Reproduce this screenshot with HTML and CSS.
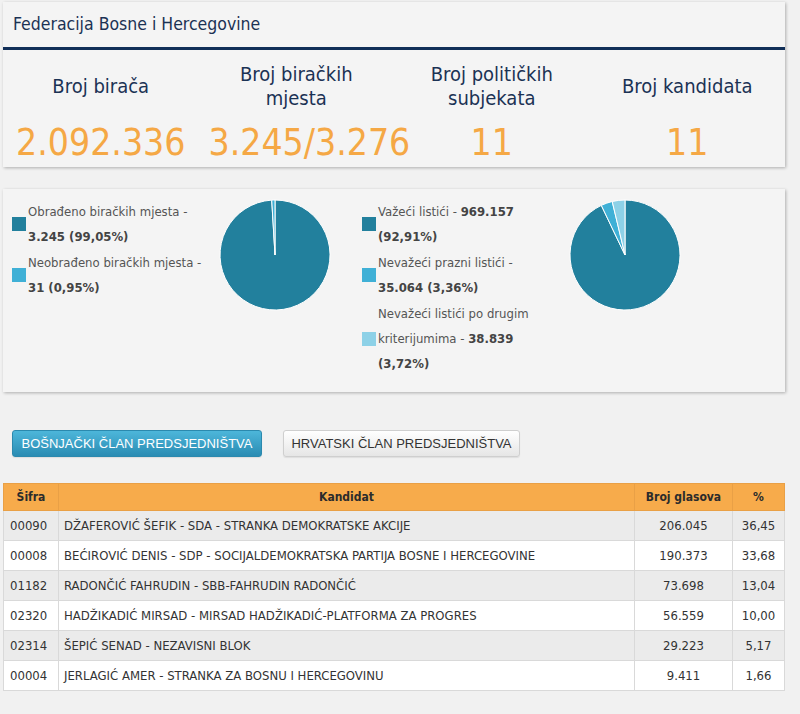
FILE: index.html
```html
<!DOCTYPE html>
<html lang="bs">
<head>
<meta charset="utf-8">
<title>Federacija Bosne i Hercegovine</title>
<link rel="stylesheet" href="styles.css">
</head>
<body>
<div class="page">
  <section class="card summary">
    <h1 class="card-title">Federacija Bosne i Hercegovine</h1>
    <div class="stats">
      <div class="stat">
        <div class="stat-label">Broj birača</div>
        <div class="stat-value">2.092.336</div>
      </div>
      <div class="stat">
        <div class="stat-label">Broj biračkih<br>mjesta</div>
        <div class="stat-value">3.245/3.276</div>
      </div>
      <div class="stat">
        <div class="stat-label">Broj političkih<br>subjekata</div>
        <div class="stat-value">11</div>
      </div>
      <div class="stat">
        <div class="stat-label">Broj kandidata</div>
        <div class="stat-value">11</div>
      </div>
    </div>
  </section>

  <section class="card charts">
    <div class="chart-group">
      <ul class="legend">
        <li class="legend-item"><span class="swatch c-dark"></span><span class="legend-text">Obrađeno biračkih mjesta -<br><b>3.245 (99,05%)</b></span></li>
        <li class="legend-item"><span class="swatch c-mid"></span><span class="legend-text">Neobrađeno biračkih mjesta -<br><b>31 (0,95%)</b></span></li>
      </ul>
      <svg class="pie" width="112" height="112" viewBox="0 0 112 112">
        <path class="f-dark" d="M56,56 L56,1 A55,55 0 1 1 52.72,1.10 Z"/>
        <path class="f-mid" d="M56,56 L52.72,1.10 A55,55 0 0 1 56,1 Z"/>
      </svg>
    </div>
    <div class="chart-group">
      <ul class="legend">
        <li class="legend-item"><span class="swatch c-dark"></span><span class="legend-text">Važeći listići - <b>969.157</b><br><b>(92,91%)</b></span></li>
        <li class="legend-item"><span class="swatch c-mid"></span><span class="legend-text">Nevažeći prazni listići -<br><b>35.064 (3,36%)</b></span></li>
        <li class="legend-item"><span class="swatch c-light"></span><span class="legend-text">Nevažeći listići po drugim<br>kriterijumima - <b>38.839</b><br><b>(3,72%)</b></span></li>
      </ul>
      <svg class="pie" width="112" height="112" viewBox="0 0 112 112">
        <path class="f-dark" d="M56,56 L56,1 A55,55 0 1 1 32.31,6.37 Z"/>
        <path class="f-mid" d="M56,56 L32.31,6.37 A55,55 0 0 1 43.22,2.51 Z"/>
        <path class="f-light" d="M56,56 L43.22,2.51 A55,55 0 0 1 56,1 Z"/>
      </svg>
    </div>
  </section>

  <div class="tabs">
    <button class="tab tab-active" type="button">BOŠNJAČKI ČLAN PREDSJEDNIŠTVA</button>
    <button class="tab tab-plain" type="button">HRVATSKI ČLAN PREDSJEDNIŠTVA</button>
  </div>

  <table class="results">
    <thead>
      <tr>
        <th class="col-code">Šifra</th>
        <th class="col-name">Kandidat</th>
        <th class="col-votes">Broj glasova</th>
        <th class="col-pct">%</th>
      </tr>
    </thead>
    <tbody>
      <tr><td>00090</td><td>DŽAFEROVIĆ ŠEFIK - SDA - STRANKA DEMOKRATSKE AKCIJE</td><td class="num">206.045</td><td class="num">36,45</td></tr>
      <tr><td>00008</td><td>BEĆIROVIĆ DENIS - SDP - SOCIJALDEMOKRATSKA PARTIJA BOSNE I HERCEGOVINE</td><td class="num">190.373</td><td class="num">33,68</td></tr>
      <tr><td>01182</td><td>RADONČIĆ FAHRUDIN - SBB-FAHRUDIN RADONČIĆ</td><td class="num">73.698</td><td class="num">13,04</td></tr>
      <tr><td>02320</td><td>HADŽIKADIĆ MIRSAD - MIRSAD HADŽIKADIĆ-PLATFORMA ZA PROGRES</td><td class="num">56.559</td><td class="num">10,00</td></tr>
      <tr><td>02314</td><td>ŠEPIĆ SENAD - NEZAVISNI BLOK</td><td class="num">29.223</td><td class="num">5,17</td></tr>
      <tr><td>00004</td><td>JERLAGIĆ AMER - STRANKA ZA BOSNU I HERCEGOVINU</td><td class="num">9.411</td><td class="num">1,66</td></tr>
    </tbody>
  </table>
</div>
</body>
</html>
```

FILE: styles.css
```css
* { box-sizing: border-box; }

html, body {
  margin: 0;
  padding: 0;
  background: #f1f1f1;
  font-family: "DejaVu Sans Condensed", "DejaVu Sans", sans-serif;
  color: #333;
}

.page {
  width: 782px;
  margin-left: 3px;
  padding-top: 2px;
}

.card {
  background: #f4f4f4;
  box-shadow: 1px 1px 3px rgba(0, 0, 0, 0.28);
}

.card-title {
  margin: 0;
  height: 48px;
  padding-left: 10px;
  line-height: 45px;
  font-size: 17.5px;
  font-weight: normal;
  color: #1b3254;
  border-bottom: 3px solid #112f58;
}

.stats {
  display: grid;
  grid-template-columns: repeat(4, minmax(0, 1fr));
  padding-bottom: 3px;
}

.stat {
  padding: 0 10px;
  text-align: center;
}

.stat-label {
  height: 50px;
  margin-top: 11px;
  display: flex;
  align-items: center;
  justify-content: center;
  font-size: 20px;
  line-height: 24px;
  color: #1b3254;
}

.stat-value {
  margin-top: 11px;
  font-size: 37px;
  line-height: 42px;
  color: #f5a845;
  white-space: nowrap;
}

.charts {
  margin-top: 22px;
  height: 203px;
  display: flex;
  gap: 31px;
  padding: 10px 9px;
}

.chart-group {
  display: flex;
  align-items: flex-start;
}

.legend {
  list-style: none;
  margin: 0;
  padding: 0;
  width: 207px;
}

.legend-item {
  display: flex;
  align-items: center;
  gap: 2px;
  margin-bottom: 1px;
}

.swatch {
  flex: none;
  width: 14px;
  height: 14px;
}

.legend-text {
  font-size: 13px;
  line-height: 25px;
  color: #555;
}

.legend-text b {
  color: #444;
}

.c-dark { background: #22809d; }
.c-mid { background: #3fb0d6; }
.c-light { background: #8dd1e7; }

.pie { display: block; flex: none; }
.pie path { stroke: #fff; stroke-width: 1; stroke-linejoin: round; }
.f-dark { fill: #22809d; }
.f-mid { fill: #3fb0d6; }
.f-light { fill: #8dd1e7; }

.tabs {
  display: flex;
  gap: 21px;
  margin-top: 38px;
  padding-left: 9px;
}

.tab {
  height: 27px;
  padding: 0;
  white-space: nowrap;
  font-family: "Liberation Sans", Arial, sans-serif;
  font-size: 13px;
  border-radius: 3px;
  border: 1px solid #cfcfcf;
  color: #333;
  background: linear-gradient(#ffffff, #e6e6e6);
  box-shadow: 0 1px 1px rgba(0, 0, 0, 0.08);
}

.tab-active {
  width: 250px;
  color: #fff;
  border-color: #2b89ae;
  background: linear-gradient(#4db6da, #2a8cb3);
}

.tab-plain { width: 237px; }

.results {
  margin-top: 26px;
  width: 782px;
  border-collapse: collapse;
  font-size: 13px;
  background: #fff;
}

.results th {
  height: 27px;
  font-size: 12px;
  background: #f7ab4b;
  color: #2b2b2b;
  font-weight: bold;
  text-align: center;
  border: 1px solid #e9a046;
}

.results td {
  height: 30px;
  padding: 0 5px;
  border: 1px solid #d9d9d9;
  color: #333;
}

.results td:first-child { padding-left: 6px; }

.results tbody tr:nth-child(odd) td { background: #ebebeb; }

.col-code { width: 55px; }
.col-votes { width: 98px; }
.col-pct { width: 52px; }

.results td.num { text-align: center; }
```
